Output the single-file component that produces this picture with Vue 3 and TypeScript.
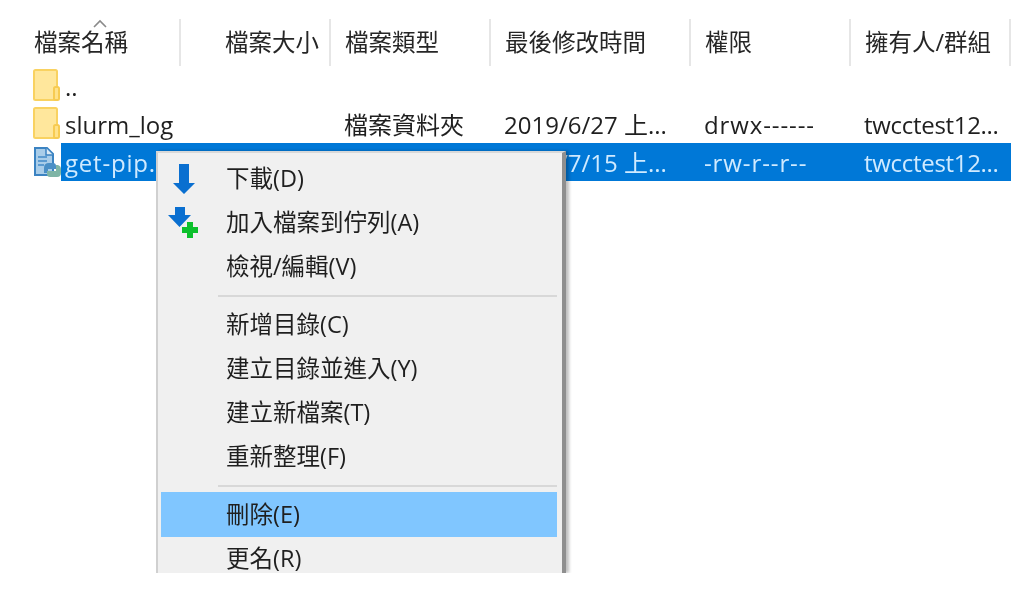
<template>
  <div class="page">
    <div class="header">
      <div v-for="col in columns" :key="col.label" class="head-cell" :class="{ right: col.right }">{{ col.label }}</div>
      <svg class="sort-caret" width="16" height="9" viewBox="0 0 16 9">
        <path d="M2 8 L8 2 L14 8" fill="none" stroke="#8a8a8a" stroke-width="1.6" />
      </svg>
    </div>

    <div v-for="row in rows" :key="row.name" class="row">
      <div class="row-icon">
        <svg v-if="row.folder" class="folder" width="27" height="32" viewBox="0 0 27 32">
          <rect x="1" y="1" width="23" height="30" rx="1.5" fill="#ffe79c" stroke="#f9d261" stroke-width="2" />
          <rect x="21" y="18" width="5" height="13" rx="1.5" fill="#ffe28a" stroke="#f7cb52" stroke-width="2" />
        </svg>
        <svg v-else width="28" height="38" viewBox="0 0 28 38">
          <path d="M2 5 H14 L20 11 V32 H2 Z" fill="#a9cde9" stroke="#3b83c2" stroke-width="2" />
          <path d="M13 5 V12 H20" fill="#dcebf6" stroke="#3b83c2" stroke-width="1.5" />
          <path d="M5 14 H14 M5 18 H14 M5 22 H11" stroke="#5c9bd0" stroke-width="2" />
          <path d="M11 25 Q11 20 16 20 H20 Q23 20 23 23 V26 H15 V30 H11 Z" fill="#4a8fc6" />
          <path d="M25 22 Q28 23 28 26 V30 Q28 34 24 34 H17 Q14 34 14 31 V28 H23 V22 Z" fill="#7fb5a6" />
        </svg>
      </div>
      <div class="row-bar" :class="{ selected: row.selected }">
        <div class="name">{{ row.name }}</div>
        <div>{{ row.type }}</div>
        <div>{{ row.time }}</div>
        <div class="perm">{{ row.perm }}</div>
        <div class="owner">{{ row.owner }}</div>
      </div>
    </div>

    <div class="menu">
      <template v-for="item in menu" :key="item.label">
        <div v-if="item.sep" class="sep"></div>
        <div class="menu-item" :class="{ hover: item.hover }">
          <span class="menu-icon">
            <svg v-if="item.icon === 'down'" width="22" height="30" viewBox="0 0 22 30">
              <path d="M6 0 H16 V19 H22 L11 30 L0 19 H6 Z" fill="#0a6fd0" />
            </svg>
            <svg v-if="item.icon === 'queue'" width="32" height="32" viewBox="0 0 32 32">
              <path d="M7 0 H17 V8 H23 L11.5 20 L0 8 H7 Z" fill="#0a6fd0" />
              <path d="M19 15 H25 V20 H30 V26 H25 V31 H19 V26 H14 V20 H19 Z" fill="#0cc02c" />
            </svg>
          </span>
          <span class="menu-label">{{ item.label }}</span>
        </div>
      </template>
    </div>
  </div>
</template>

<script setup lang="ts">
interface FileRow {
  name: string;
  type: string;
  time: string;
  perm: string;
  owner: string;
  folder: boolean;
  selected?: boolean;
}

interface MenuEntry {
  label: string;
  icon?: "down" | "queue";
  sep?: boolean;
  hover?: boolean;
}

const columns = [
  { label: "檔案名稱" },
  { label: "檔案大小", right: true },
  { label: "檔案類型" },
  { label: "最後修改時間" },
  { label: "權限" },
  { label: "擁有人/群組" },
];

const rows: FileRow[] = [
  { name: "..", type: "", time: "", perm: "", owner: "", folder: true },
  { name: "slurm_log", type: "檔案資料夾", time: "2019/6/27 上...", perm: "drwx------", owner: "twcctest12...", folder: true },
  { name: "get-pip.py", type: "", time: "2019/7/15 上...", perm: "-rw-r--r--", owner: "twcctest12...", folder: false, selected: true },
];

const menu: MenuEntry[] = [
  { label: "下載(D)", icon: "down" },
  { label: "加入檔案到佇列(A)", icon: "queue" },
  { label: "檢視/編輯(V)" },
  { label: "新增目錄(C)", sep: true },
  { label: "建立目錄並進入(Y)" },
  { label: "建立新檔案(T)" },
  { label: "重新整理(F)" },
  { label: "刪除(E)", sep: true, hover: true },
  { label: "更名(R)" },
];
</script>

<style>
html,
body {
  margin: 0;
  background: #fff;
}
</style>

<style scoped>
.page {
  position: relative;
  width: 1026px;
  height: 596px;
  overflow: hidden;
  background: #fff;
  color: #1f1f1f;
  font-family: "Open Sans", "Noto Sans CJK TC", sans-serif;
  font-size: 24px;
  filter: blur(0.5px);
}

.header {
  position: relative;
  display: grid;
  grid-template-columns: 161px 150px 160px 200px 160px 160px;
  height: 47px;
  margin: 19px 0 1px 20px;
}

.head-cell {
  height: 47px;
  padding: 0 0 4px 14px;
  display: flex;
  align-items: center;
  border-right: 2px solid #e6e6e6;
  box-sizing: border-box;
  font-size: 23.5px;
  color: #262626;
  white-space: nowrap;
  overflow: hidden;
}

.head-cell.right {
  justify-content: flex-end;
  padding-right: 10px;
}

.sort-caret {
  position: absolute;
  left: 72px;
  top: 0;
}

.row {
  display: flex;
  height: 38px;
  padding-left: 33px;
}

.row-icon {
  width: 28px;
  display: flex;
  align-items: center;
}

.folder {
  margin-top: -3px;
}

.row-bar {
  display: grid;
  grid-template-columns: 269px 160px 200px 160px 161px;
  align-items: center;
  width: 950px;
  box-sizing: border-box;
  padding-top: 2px;
  white-space: nowrap;
  line-height: 36px;
}

.row-bar > div {
  padding-left: 14px;
  overflow: hidden;
}

.row-bar > .name {
  padding-left: 4px;
}

.row-bar.selected {
  background: #0078d7;
  color: #cfeaff;
}

.row-bar.selected > .name {
  letter-spacing: 0.8px;
}

.perm {
  letter-spacing: 0.9px;
}

.owner {
  letter-spacing: -0.3px;
}

.menu {
  position: absolute;
  left: 156px;
  top: 151px;
  width: 410px;
  height: 422px;
  box-sizing: border-box;
  padding: 4px 5px 0 3px;
  overflow: hidden;
  background: #f0f0f0;
  border-left: 2px solid #d0d0d0;
  border-top: 2px solid #d8d8d8;
  border-right: 4px solid #8f8f8f;
  box-shadow: 3px 0 3px rgba(0, 0, 0, 0.25);
  clip-path: inset(-6px -8px 0 -2px);
}

.menu-item {
  display: flex;
  align-items: center;
  height: 44px;
}

.menu-item.hover {
  height: 45px;
  margin-top: -1px;
  background: #80c6ff;
}

.menu-icon {
  display: flex;
  align-items: center;
  justify-content: center;
  width: 46px;
  margin-right: 19px;
}

.menu-label {
  font-size: 23.5px;
  line-height: 24px;
  white-space: nowrap;
  margin-top: -2px;
}

.sep {
  height: 2px;
  margin: 6px 0 6px 57px;
  background: #d8d8d8;
}
</style>
